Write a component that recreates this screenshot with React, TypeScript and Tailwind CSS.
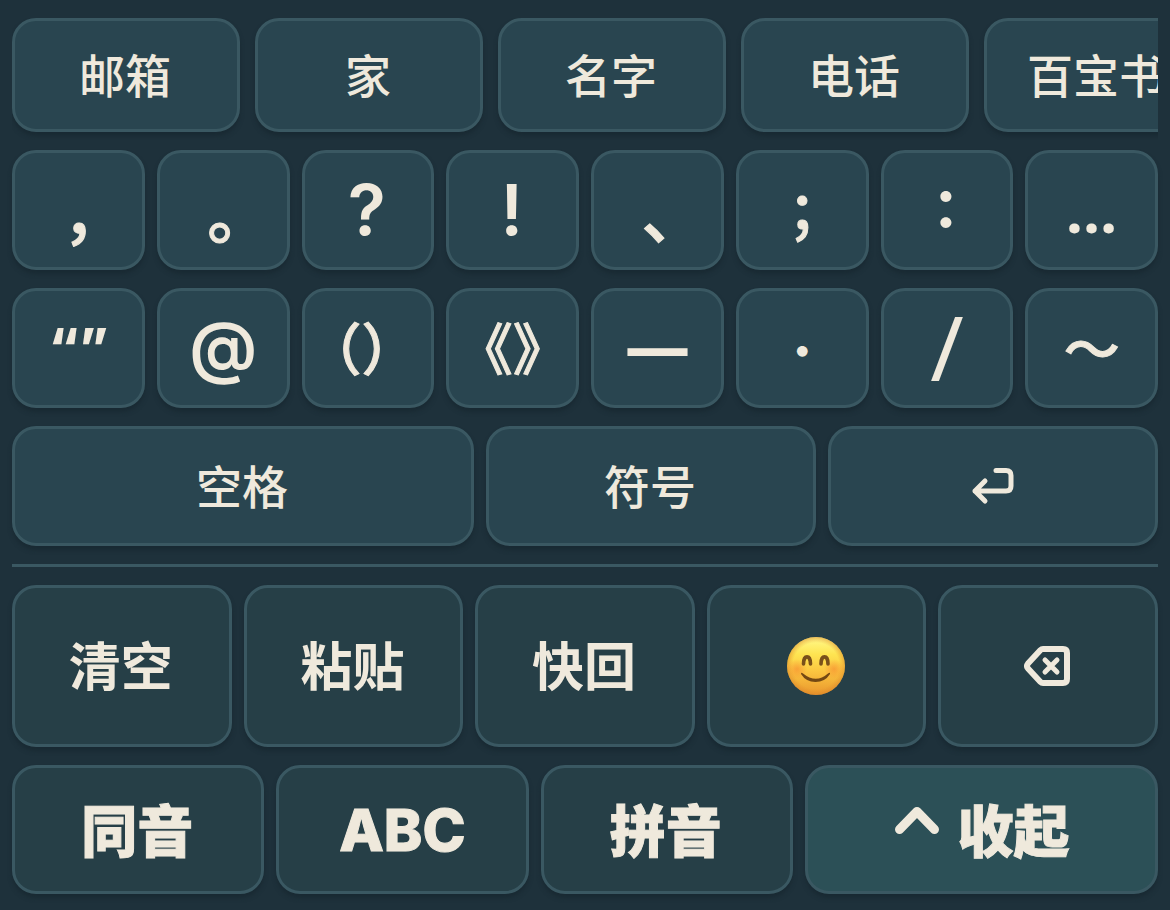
import type { ReactNode } from "react";

type KeyTone = "soft" | "deep" | "accent";

const tones: Record<KeyTone, string> = {
  soft: "bg-[#294550]",
  deep: "bg-[#263f47]",
  accent: "bg-[#2c5057]",
};

function Key({
  tone = "soft",
  className = "",
  label,
  children,
}: {
  tone?: KeyTone;
  className?: string;
  label?: string;
  children: ReactNode;
}) {
  return (
    <button
      type="button"
      aria-label={label}
      className={`flex min-w-0 cursor-pointer items-center justify-center whitespace-pre rounded-3xl border-3 border-[#3a5862] shadow-[0_4px_4px_#192a33] ${tones[tone]} ${className}`}
    >
      {children}
    </button>
  );
}

const LATIN = "pr-0.5 font-['Inter',sans-serif] font-semibold text-[70px] leading-none";
const CJK =
  "font-['Noto_Sans_CJK_SC',sans-serif] font-medium text-[64px] leading-none [font-feature-settings:'halt'] [-webkit-text-stroke:1px]";
const CJK_SMALL =
  "pb-1 font-['Noto_Sans_CJK_SC',sans-serif] font-medium text-[56px] leading-none [font-feature-settings:'halt'] [-webkit-text-stroke:1px]";

const phrases = ["邮箱", "家", "名字", "电话"];

const symbols: { text: string; style: string }[] = [
  { text: "，", style: CJK },
  { text: "。", style: CJK },
  { text: "?", style: LATIN },
  { text: "!", style: LATIN },
  { text: "、", style: CJK },
  { text: "；", style: CJK_SMALL },
  { text: ":", style: `${LATIN} [font-feature-settings:'case']` },
  { text: "…", style: "font-['Noto_Sans',sans-serif] font-bold text-[60px] leading-none" },
  { text: "“”", style: "font-['Inter',sans-serif] font-extrabold text-[52px] leading-none" },
  { text: "@", style: "pb-1 font-['Inter',sans-serif] font-semibold text-[68px] leading-none" },
  { text: "（） ", style: CJK_SMALL },
  { text: "《》", style: CJK_SMALL },
  { text: "—", style: "font-['Inter',sans-serif] font-extrabold text-[60px] leading-none" },
  { text: "·", style: "font-['Noto_Sans_CJK_SC',sans-serif] text-[46px] leading-none" },
  { text: "/", style: "pb-1 font-['Noto_Sans',sans-serif] font-normal text-[90px] leading-none" },
  { text: "～", style: CJK_SMALL },
];

function ReturnIcon() {
  return (
    <svg width="44" height="38" viewBox="0 0 44 38" fill="none" stroke="currentColor" strokeWidth="5" strokeLinecap="round" strokeLinejoin="round" aria-hidden="true">
      <path d="M25 3.500H35Q40 3.500 40 8.500V19Q40 24 35 24H4M14 14L4 24L14 34" />
    </svg>
  );
}

function DeleteIcon() {
  return (
    <svg width="46" height="40" viewBox="0 0 46 40" fill="none" stroke="currentColor" strokeLinecap="round" strokeLinejoin="round" aria-hidden="true">
      <path d="M19 3H39Q43 3 43 7V33Q43 37 39 37H19Q17.500 37 16.500 36L4 22.500Q2 20 4 17.500L16.500 4Q17.500 3 19 3Z" strokeWidth="6" />
      <path d="M21 14L33 26M33 14L21 26" strokeWidth="5" />
    </svg>
  );
}

function CaretIcon() {
  return (
    <svg width="44" height="28" viewBox="0 0 44 28" fill="none" stroke="currentColor" strokeWidth="9" strokeLinecap="round" strokeLinejoin="round" aria-hidden="true">
      <path d="M4.500 23.500L22 5.500L39.500 23.500" />
    </svg>
  );
}

function SmileIcon() {
  return (
    <svg width="58" height="58" viewBox="0 0 58 58" aria-hidden="true">
      <defs>
        <linearGradient id="face" x1="0" y1="0" x2="0" y2="1">
          <stop offset="0" stopColor="#fffa8c" />
          <stop offset="0.3" stopColor="#fee451" />
          <stop offset="0.6" stopColor="#fbc540" />
          <stop offset="1" stopColor="#e9962d" />
        </linearGradient>
        <radialGradient id="edge">
          <stop offset="0.8" stopColor="#e08a28" stopOpacity="0" />
          <stop offset="1" stopColor="#d98128" stopOpacity="0.5" />
        </radialGradient>
        <radialGradient id="cheek">
          <stop offset="0" stopColor="#f5792b" stopOpacity="0.5" />
          <stop offset="1" stopColor="#f5792b" stopOpacity="0" />
        </radialGradient>
      </defs>
      <circle cx="29" cy="29" r="29" fill="url(#face)" />
      <circle cx="29" cy="29" r="29" fill="url(#edge)" />
      <circle cx="10" cy="32" r="10" fill="url(#cheek)" />
      <circle cx="47" cy="32" r="10" fill="url(#cheek)" />
      <path d="M16.500 27C16.500 17.500 23.500 17.500 23.500 27M34 27C34 17.500 41 17.500 41 27" fill="none" stroke="#79501a" strokeWidth="3.600" strokeLinecap="round" />
      <path d="M14 37Q14 35 16 36.500Q29 47 41 36.500Q43.500 35 43 37Q38 45 28.500 45Q19 45 14 37Z" fill="#734813" />
    </svg>
  );
}

export default function App() {
  return (
    <main className="flex min-h-screen flex-col gap-[18px] bg-[#1e313b] px-3 py-[18px] font-['Noto_Sans_CJK_SC',sans-serif] text-[46px] leading-none font-medium text-[#efe9dc]">
      <div className="-mb-2 flex gap-[15px] overflow-x-auto overflow-y-hidden pb-2 [scrollbar-width:none]">
        {phrases.map((p) => (
          <Key key={p} className="h-[114px] w-57 shrink-0 pr-0.5 pb-1">
            {p}
          </Key>
        ))}
        <Key className="h-[114px] w-57 shrink-0 pr-1 pb-1">百宝书</Key>
      </div>

      <div className="grid grid-cols-8 gap-x-3 gap-y-[18px]">
        {symbols.map((s) => (
          <Key key={s.text} className="h-30">
            <span className={s.style}>{s.text}</span>
          </Key>
        ))}
      </div>

      <div className="grid grid-cols-[7fr_5fr_5fr] gap-3">
        <Key className="h-30 pr-0.5 pb-1">空格</Key>
        <Key className="h-30 pr-0.5 pb-1">符号</Key>
        <Key className="h-30" label="换行">
          <ReturnIcon />
        </Key>
      </div>

      <hr className="border-t-3 border-[#3a5862]" />

      <div className="grid grid-cols-5 gap-3 text-[52px] font-bold">
        <Key tone="deep" className="h-[162px] pr-0.5 pb-1">清空</Key>
        <Key tone="deep" className="h-[162px] pr-0.5 pb-1">粘贴</Key>
        <Key tone="deep" className="h-[162px] pr-0.5 pb-1">快回</Key>
        <Key tone="deep" className="h-[162px] pr-0.5" label="表情">
          <SmileIcon />
        </Key>
        <Key tone="deep" className="h-[162px] pr-0.5" label="删除">
          <DeleteIcon />
        </Key>
      </div>

      <div className="grid grid-cols-[5fr_5fr_5fr_7fr] gap-3 text-[56px] font-black [-webkit-text-stroke:1px]">
        <Key tone="deep" className="h-[129px] pr-0.5 pb-1">同音</Key>
        <Key tone="deep" className="h-[129px] font-['Inter',sans-serif] text-[58px] font-extrabold">ABC</Key>
        <Key tone="deep" className="h-[129px] pr-0.5 pb-1">拼音</Key>
        <Key tone="accent" className="h-[129px] gap-[18px] pl-0.5 pb-1">
          <span className="pb-4">
            <CaretIcon />
          </span>
          收起
        </Key>
      </div>
    </main>
  );
}
